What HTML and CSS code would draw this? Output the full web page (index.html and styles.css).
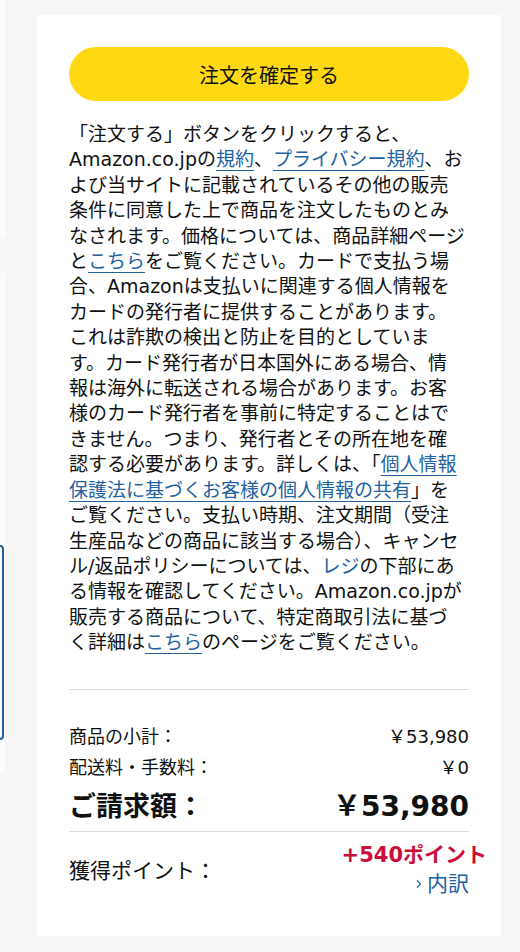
FILE: index.html
```html
<!DOCTYPE html>
<html lang="ja">
<head>
    <meta charset="UTF-8">
    <meta name="viewport" content="width=device-width, initial-scale=1.0">
    <title>注文の確定</title>
    <link rel="stylesheet" href="styles.css">
</head>
<body>
    <div class="page">
        <div class="side">
            <div class="sideBlock sideTop"></div>
            <div class="sideBlock sideMain">
                <div class="sideSelected"></div>
            </div>
        </div>

        <div class="card">
            <button class="placeOrder" type="button">注文を確定する</button>

            <p class="notice">
                「注文する」ボタンをクリックすると、<br>
                Amazon.co.jpの<a href="#">規約</a>、<a href="#">プライバシー規約</a>、お<br>
                よび当サイトに記載されているその他の販売<br>
                条件に同意した上で商品を注文したものとみ<br>
                なされます。価格については、商品詳細ページ<br>
                と<a href="#">こちら</a>をご覧ください。カードで支払う場<br>
                合、Amazonは支払いに関連する個人情報を<br>
                カードの発行者に提供することがあります。<br>
                これは詐欺の検出と防止を目的としていま<br>
                す。カード発行者が日本国外にある場合、情<br>
                報は海外に転送される場合があります。お客<br>
                様のカード発行者を事前に特定することはで<br>
                きません。つまり、発行者とその所在地を確<br>
                認する必要があります。詳しくは、「<a href="#">個人情報<br>
                保護法に基づくお客様の個人情報の共有</a>」を<br>
                ご覧ください。支払い時期、注文期間（受注<br>
                生産品などの商品に該当する場合）、キャンセ<br>
                ル/返品ポリシーについては、<a href="#" class="plain">レジ</a>の下部にあ<br>
                る情報を確認してください。Amazon.co.jpが<br>
                販売する商品について、特定商取引法に基づ<br>
                く詳細は<a href="#">こちら</a>のページをご覧ください。
            </p>

            <div class="summary">
                <div class="row">
                    <span>商品の小計：</span>
                    <span>￥53,980</span>
                </div>
                <div class="row">
                    <span>配送料・手数料：</span>
                    <span>￥0</span>
                </div>
                <div class="row total">
                    <span>ご請求額：</span>
                    <span>￥53,980</span>
                </div>
            </div>

            <div class="points">
                <span class="pointsLabel">獲得ポイント：</span>
                <div class="pointsValue">
                    <div class="pointsAmount">+540ポイント</div>
                    <a href="#" class="breakdown">
                        <svg width="6" height="10" viewBox="0 0 6 10"><path d="M1 1.5 L4.5 5 L1 8.5" fill="none" stroke="#2162a1" stroke-width="1.2"/></svg>
                        内訳
                    </a>
                </div>
            </div>
        </div>
    </div>
</body>
</html>
```

FILE: styles.css
```css
body {
    margin: 0;
    padding: 0;
    background-color: #f6f6f6;
    font-family: "DejaVu Sans", "Noto Sans CJK JP", sans-serif;
    color: #0f1111;
}

.page {
    display: flex;
    gap: 32px;
    min-height: 952px;
}

/* sliver of the left column that is cut off by the viewport */
.side {
    width: 5px;
    flex-shrink: 0;
}

.sideBlock {
    background-color: #fcfcfc;
}

.sideTop {
    height: 238px;
}

.sideMain {
    margin-top: 35px;
    height: 500px;
    padding-top: 272px;
    box-sizing: border-box;
}

.sideSelected {
    height: 195px;
    margin-right: 1px;
    border: 2px solid #2162a1;
    border-left: none;
    border-radius: 0 8px 8px 0;
    box-sizing: border-box;
}

.card {
    width: 464px;
    box-sizing: border-box;
    margin-top: 15px;
    align-self: flex-start;
    background-color: #fff;
    padding: 32px 32px 35px;
}

.placeOrder {
    display: block;
    width: 100%;
    height: 54px;
    border: none;
    border-radius: 27px;
    background-color: #ffd814;
    color: #0f1111;
    font-family: "Noto Sans CJK JP", sans-serif;
    font-size: 20px;
    padding: 0;
}

.notice {
    margin: 21px 0 0;
    font-size: 19px;
    line-height: 25.4px;
}

.notice a {
    color: #2162a1;
    text-decoration: underline;
    text-underline-offset: 4px;
    text-decoration-thickness: 1px;
}

.notice a.plain {
    text-decoration: none;
}

.summary {
    margin-top: 33px;
    border-top: 1px solid #dddddd;
    padding-top: 34px;
    padding-bottom: 6px;
    border-bottom: 1px solid #dddddd;
}

.row {
    display: flex;
    justify-content: space-between;
    font-size: 18px;
    line-height: 25px;
    margin-bottom: 6px;
}

.row.total {
    margin-top: 9px;
    margin-bottom: 0;
    font-size: 27px;
    line-height: 36px;
    font-weight: bold;
}

.row.total span:last-child {
    font-size: 28px;
}

.points {
    display: flex;
    justify-content: space-between;
    align-items: center;
    padding-top: 10px;
}

.pointsLabel {
    font-size: 21px;
    line-height: 26px;
}

.pointsValue {
    text-align: right;
    margin-right: -18px;
}

.pointsAmount {
    color: #cc0c39;
    font-weight: bold;
    font-size: 21px;
    line-height: 26px;
}

.breakdown {
    display: inline-flex;
    align-items: center;
    gap: 5px;
    margin-right: 18px;
    color: #2162a1;
    text-decoration: none;
    font-size: 21px;
    line-height: 33px;
}
```
